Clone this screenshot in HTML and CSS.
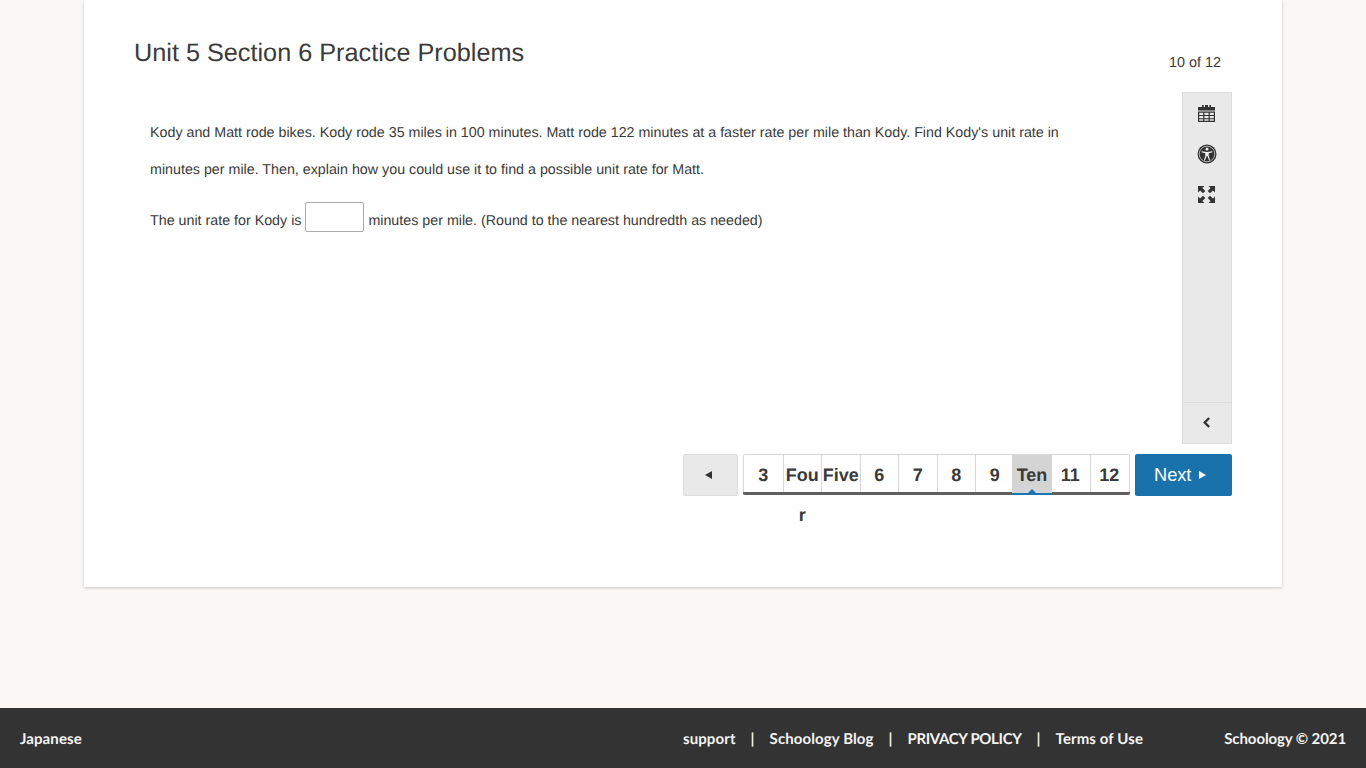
FILE: index.html
```html
<!DOCTYPE html>
<html lang="en">
<head>
<meta charset="utf-8">
<title>Unit 5 Section 6 Practice Problems</title>
<link rel="stylesheet" href="styles.css">
</head>
<body>
<main class="main">
  <section class="card">
    <header class="head">
      <h1 class="title">Unit 5 Section 6 Practice Problems</h1>
      <div class="count">10 of 12</div>
    </header>
    <div class="body">
      <div class="question">
        <p class="prompt">Kody and Matt rode bikes. Kody rode 35 miles in 100 minutes. Matt rode 122 minutes at a faster rate per mile than Kody. Find Kody's unit rate in minutes per mile. Then, explain how you could use it to find a possible unit rate for Matt.</p>
        <p class="answer">The unit rate for Kody is <input class="blank" type="text" aria-label="answer"> minutes per mile. (Round to the nearest hundredth as needed)</p>
      </div>
      <aside class="tools">
        <div class="tool-list">
          <svg class="ico cal" viewBox="0 0 17 17" width="17" height="17"><path fill="#333" fill-rule="evenodd" d="M4 0h1.600v2H7V0h3v2h1.400V0H13v2h4v3.600H0V2h4zM0 6.500h17V17H0zM1.200 7.700V10h4V7.700zm5.200 0V10h4.200V7.700zm5.400 0V10h4V7.700zM1.200 11v2.200h4V11zm5.200 0v2.200h4.200V11zm5.400 0v2.200h4V11zM1.200 14.200v1.600h4v-1.600zm5.200 0v1.600h4.200v-1.600zm5.400 0v1.600h4v-1.600z"/></svg>
          <svg class="ico acc" viewBox="0 0 20 20" width="20" height="20"><circle cx="10" cy="10" r="9.500" fill="#333"/><circle cx="10" cy="10" r="7.800" fill="none" stroke="#e9e9e9" stroke-width=".7"/><circle cx="10" cy="5.200" r="1.400" fill="#f2f2f2"/><path fill="#f2f2f2" d="M4.800 7.200 10 8l5.200-.8.3 1-3.800 1v2.600l1.400 4.400-1 .4L10.400 12h-.8l-1.700 4.600-1-.4 1.400-4.400V9.200l-3.800-1z"/></svg>
          <svg class="ico exp" viewBox="0 0 17 17" width="17" height="17"><path fill="#333" d="M0 0h6.500L4.400 2.100l2.900 2.900-2.300 2.300-2.900-2.900L0 6.500zM17 0v6.500l-2.100-2.100L12 7.300 9.700 5l2.900-2.900L10.500 0zM0 17v-6.500l2.100 2.100L5 9.700 7.300 12l-2.900 2.900 2.100 2.100zM17 17h-6.500l2.100-2.100L9.700 12 12 9.700l2.900 2.900 2.100-2.100z"/></svg>
        </div>
        <div class="tool-foot">
          <svg viewBox="0 0 10 12" width="9" height="11"><path fill="none" stroke="#333" stroke-width="2.600" d="M8 1 3 6l5 5"/></svg>
        </div>
      </aside>
    </div>
    <nav class="pager">
      <button class="prev" type="button"><span class="tri tri-left"></span></button>
      <ol class="tabs">
        <li class="tab">3</li>
        <li class="tab">Four</li>
        <li class="tab">Five</li>
        <li class="tab">6</li>
        <li class="tab">7</li>
        <li class="tab">8</li>
        <li class="tab">9</li>
        <li class="tab current">Ten</li>
        <li class="tab">11</li>
        <li class="tab">12</li>
      </ol>
      <button class="next" type="button">Next<span class="tri tri-right"></span></button>
    </nav>
  </section>
</main>
<footer class="foot">
  <div class="lang">Japanese</div>
  <div class="links">
    <a>support</a><span>|</span><a>Schoology Blog</a><span>|</span><a class="caps">PRIVACY POLICY</a><span>|</span><a>Terms of Use</a>
  </div>
  <div class="copy">Schoology © 2021</div>
</footer>
</body>
</html>
```

FILE: styles.css
```css
* { box-sizing: border-box; }
html, body { margin: 0; height: 100%; }
body {
  min-height: 768px;
  display: flex;
  flex-direction: column;
  background: #f9f8f7;
  font-family: "Liberation Sans", Arial, sans-serif;
  color: #3a3a3a;
  overflow: hidden;
  text-rendering: geometricPrecision;
}
.main { flex: 1; padding: 0 84px; }
.card {
  height: 587px;
  background: #fff;
  padding: 0 50px;
  box-shadow: 0 1px 3px rgba(0,0,0,.2);
}
.head { height: 92px; display: flex; justify-content: space-between; }
.title {
  margin: 38px 0 0;
  font-size: 25.25px;
  line-height: 30px;
  font-weight: 400;
}
.count { margin: 55px 11px 0 0; font-size: 14.4px; line-height: 16px; }
.body { display: flex; justify-content: space-between; height: 352px; }
.question { width: 930px; padding: 23px 0 0 16px; font-size: 14.28px; }
.prompt { margin: 0; line-height: 37px; }
.answer { margin: 13px 0 0; line-height: 30px; }
.blank {
  width: 59px;
  height: 30px;
  margin: 0;
  vertical-align: 3px;
  border: 1px solid #aaa;
  border-radius: 2px;
  background: #fff;
}
.tools {
  width: 50px;
  display: flex;
  flex-direction: column;
  background: #e9e9e9;
  border: 1px solid #ddd;
}
.tool-list {
  flex: 1;
  display: flex;
  flex-direction: column;
  align-items: center;
  padding: 12px 1px 0 0;
}
.ico { display: block; }
.acc { margin-top: 22px; }
.exp { margin-top: 22px; }
.tool-foot {
  height: 41px;
  display: flex;
  align-items: center;
  justify-content: center;
  border-top: 1px solid #ddd;
  padding: 0 2px 2px 0;
}
.pager { display: flex; justify-content: flex-end; margin-top: 10px; height: 42px; }
.prev {
  width: 55px;
  height: 42px;
  margin-right: 5px;
  padding: 0 5px 0 0;
  background: #e9e9e9;
  border: 1px solid #ddd;
  border-radius: 2px;
  display: flex;
  align-items: center;
  justify-content: center;
}
.tri { display: inline-block; width: 0; height: 0; border-style: solid; }
.tri-left { border-width: 4px 7px 4px 0; border-color: transparent #333 transparent transparent; }
.tri-right { border-width: 4px 0 4px 7px; border-color: transparent transparent transparent #fff; margin-left: 8px; }
.tabs {
  display: grid;
  grid-template-columns: repeat(10, 1fr);
  width: 387px;
  height: 41px;
  margin: 0;
  padding: 0;
  list-style: none;
  border: 1px solid #d8d8d8;
  border-bottom: 0;
  border-radius: 2px 2px 0 0;
  position: relative;
}
.tabs::after {
  content: "";
  position: absolute;
  left: -1px;
  right: -1px;
  bottom: 0;
  height: 3px;
  background: #5f5f5f;
  border-radius: 0 0 2px 2px;
}
.tab {
  min-width: 0;
  height: 38px;
  border-left: 1px solid #d8d8d8;
  text-align: center;
  font-size: 18px;
  font-weight: 700;
  line-height: 40px;
  word-break: break-all;
  color: #3a3a3a;
}
.tab:first-child { border-left: 0; }
.current {
  position: relative;
  margin-left: -1.500px;
  background: #d4d4d4;
  border-left: 0;
  z-index: 1;
  height: 40px;
}
.current ~ .tab { border-left: 0; border-right: 1px solid #d8d8d8; padding-right: 1px; }
.current ~ .tab:last-child { border-right: 0; }
.current::after {
  content: "";
  position: absolute;
  left: 0;
  right: 0;
  bottom: 0;
  height: 2px;
  background: #1a75b0;
}
.current::before {
  content: "";
  position: absolute;
  left: 50%;
  bottom: 2px;
  margin-left: -4px;
  border-style: solid;
  border-width: 0 4px 4px;
  border-color: transparent transparent #1a75b0;
}
.next {
  width: 97px;
  height: 42px;
  margin-left: 5px;
  padding: 0 0 0 19px;
  background: #1a72ad;
  border: 0;
  border-radius: 2px;
  color: #fff;
  font: 400 18.2px "Liberation Sans", Arial, sans-serif;
  display: flex;
  align-items: center;
  justify-content: flex-start;
}
.foot {
  height: 60px;
  display: flex;
  align-items: center;
  padding: 1px 20px 0;
  background: #333;
  color: #f5f5f5;
  font-family: Lato, "Noto Sans", sans-serif;
  font-size: 15px;
  font-weight: 700;
  letter-spacing: .1px;
}
.caps { letter-spacing: -.35px; }
.lang { width: 663px; }
.links { display: flex; gap: 15px; }
.copy { margin-left: auto; letter-spacing: -.1px; }
```
